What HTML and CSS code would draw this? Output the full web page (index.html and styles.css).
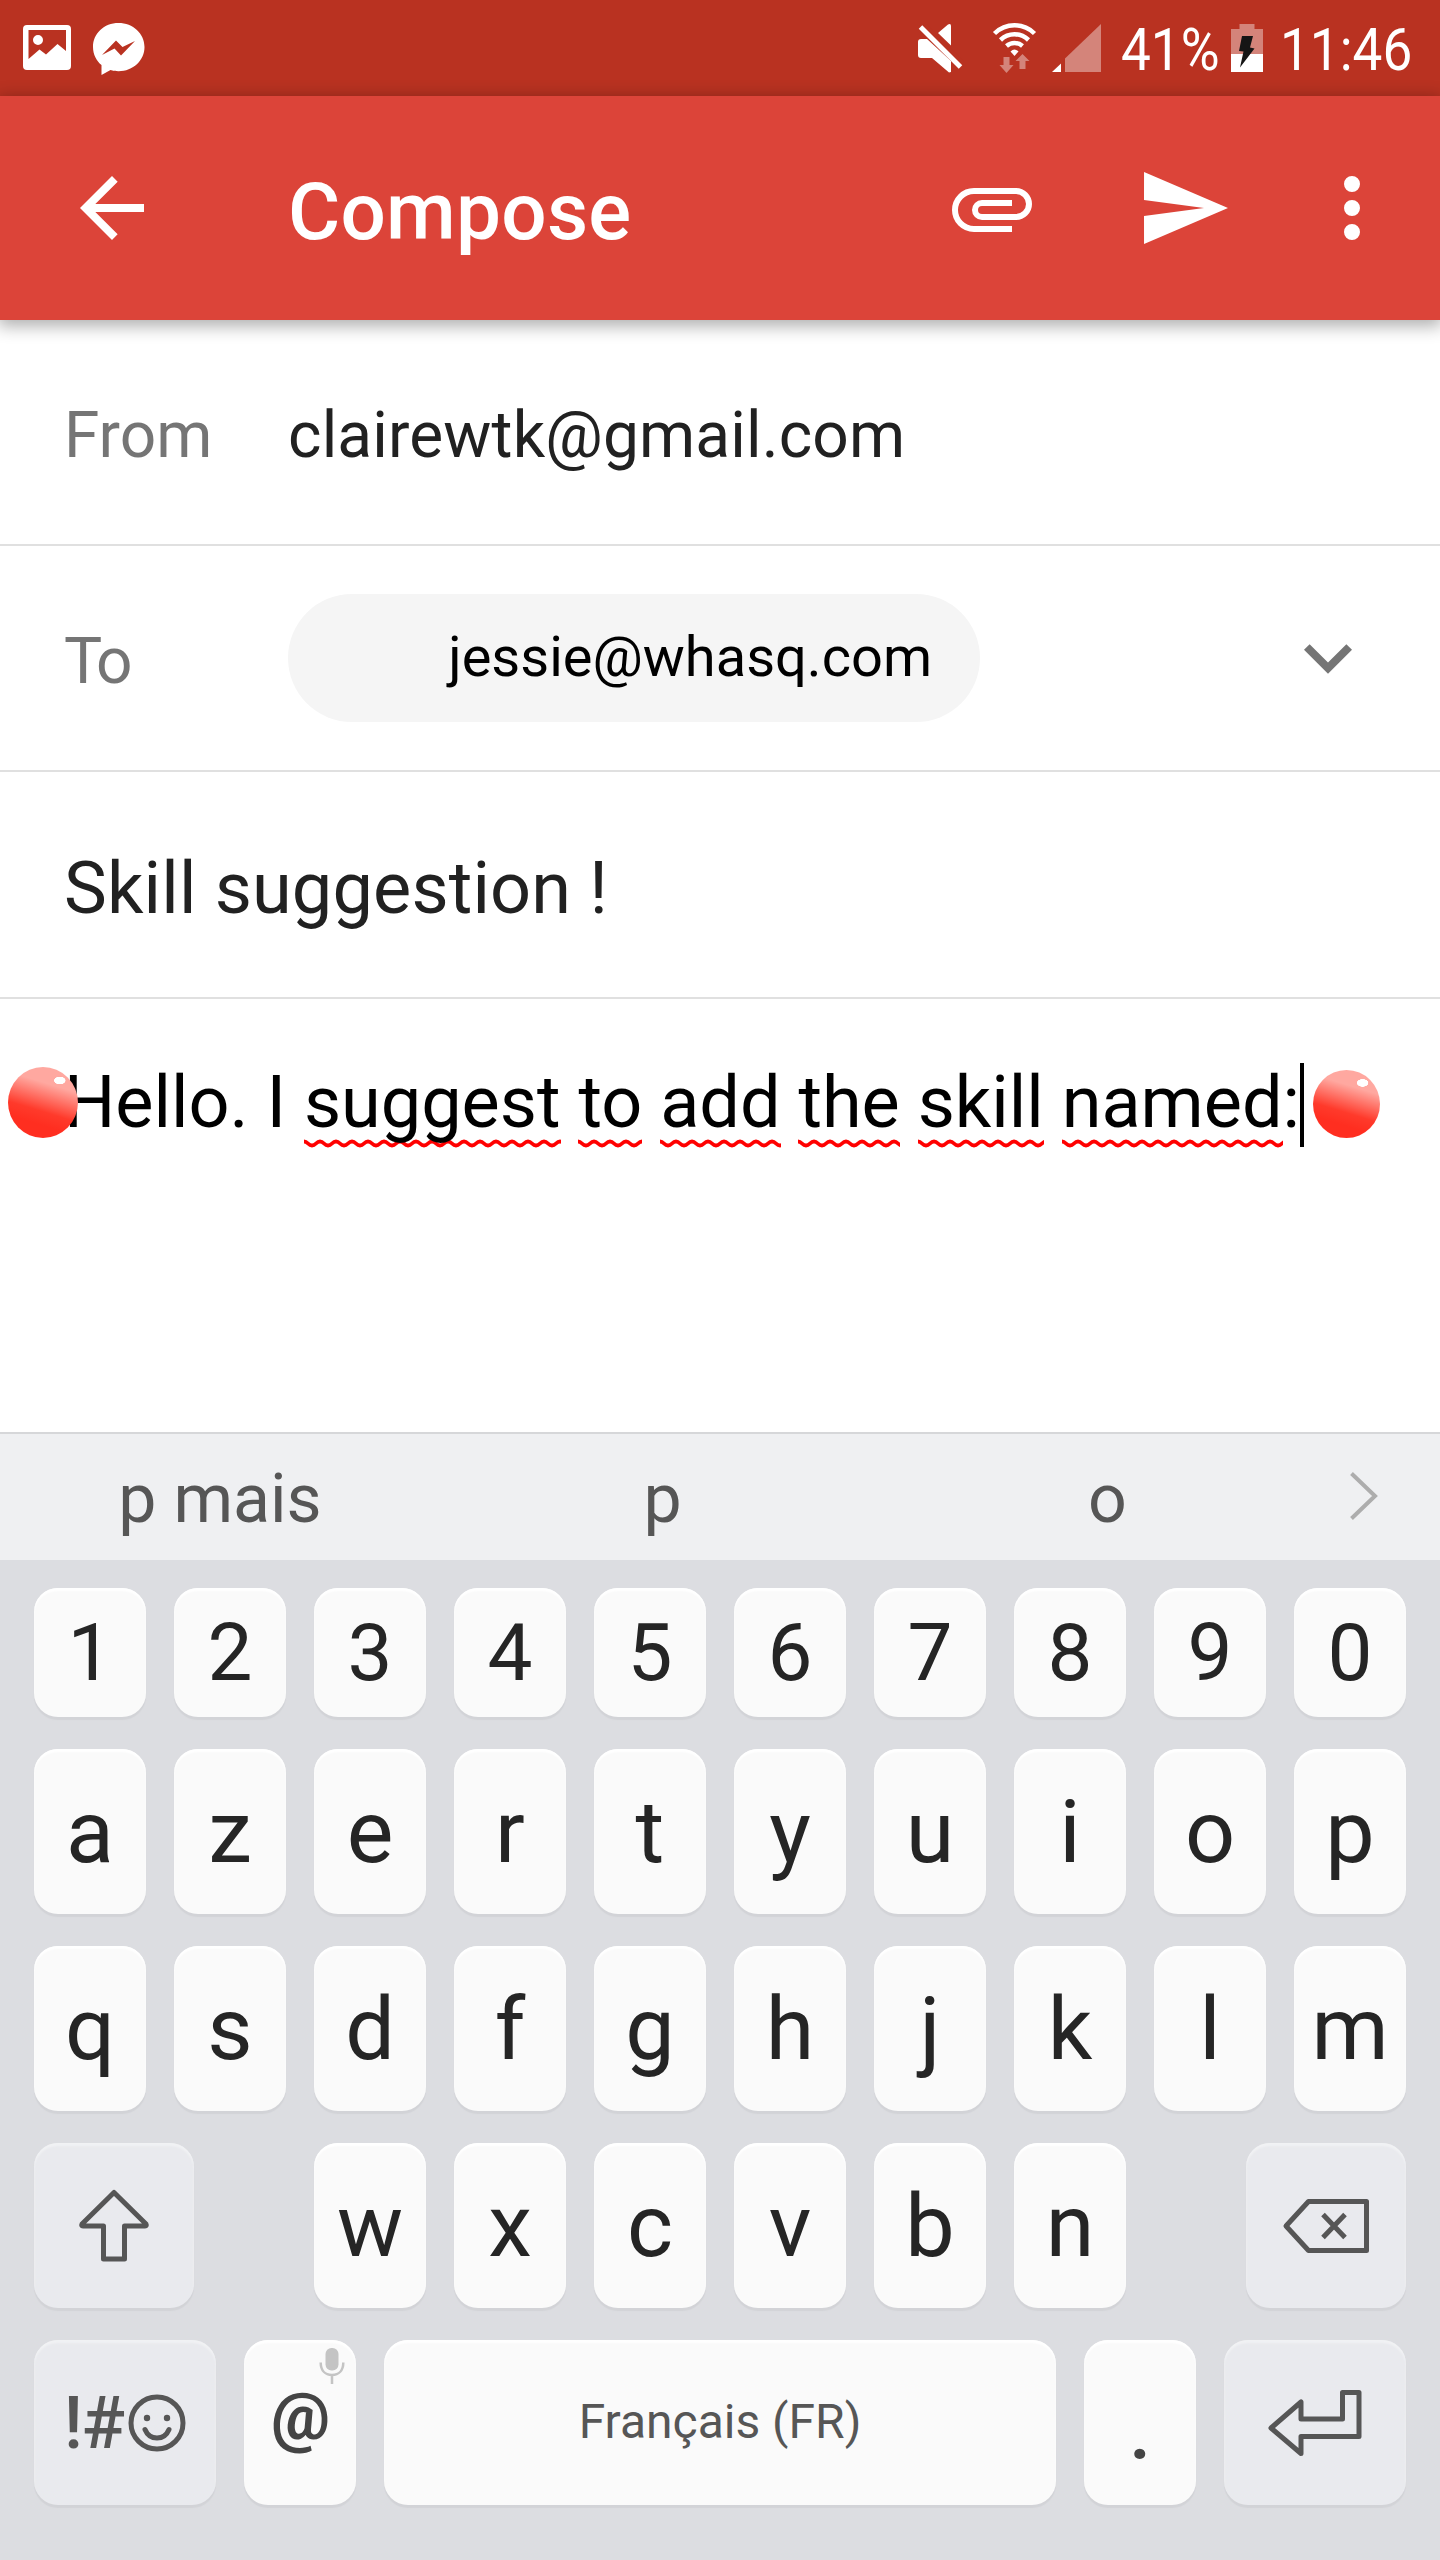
FILE: index.html
```html
<!DOCTYPE html>
<html lang="en">
<head>
<meta charset="utf-8">
<title>Compose</title>
<link rel="stylesheet" href="styles.css">
</head>
<body>
<div class="screen">
  <header class="status">
    <svg class="status-photo" viewBox="23 25 48 46" width="48" height="46"><path fill="#fff" fill-rule="evenodd" d="M27 25h40a4 4 0 0 1 4 4v37a4 4 0 0 1-4 4H27a4 4 0 0 1-4-4V29a4 4 0 0 1 4-4zM28.500 30v29l11-9.500 6.500 5 11.500-10.500 8.500 7V30zM38 35a5 5 0 1 1 0 10 5 5 0 0 1 0-10z"/></svg>
    <svg class="status-messenger" viewBox="93 23 52 53" width="52" height="53"><path fill="#fff" d="M118.500 23C104 23 93 33.500 93 47c0 7.500 3.500 14 8.500 18v10l9-5c2.500.800 5 1.200 8 1.200 14.500 0 26-10.700 26-24.200S133 23 118.500 23z"/><path fill="#b93221" d="M102 55l14-14.500 6.500 6.500 12.500-6-14 14.500-6.500-7z"/></svg>
    <span class="spacer"></span>
    <svg class="status-mute" viewBox="916 22 48 52" width="48" height="52"><path fill="#fff" d="M921 39h6l24 22v11l-2 .5L932 58h-11a3 3 0 0 1-3-3V42a3 3 0 0 1 3-3zM938 33l10-8.500q3-1.500 3 1.500v19.500z"/><path stroke="#b93221" stroke-width="4" d="M924 24l41 41"/><path stroke="#fff" stroke-width="5" d="M920.500 27l40 40"/></svg>
    <svg class="status-wifi" viewBox="992 22 46 52" width="46" height="52"><g fill="none" stroke="#fff" stroke-width="4.500"><path d="M994.500 33.500Q1003 25.300 1014.500 25.300T1034.500 33.500"/><path d="M1000.500 40Q1006.500 34.300 1014.500 34.300T1028.500 40"/><path d="M1006.500 46Q1010 43 1014.500 43T1022.500 46"/></g><path fill="#fff" d="M1010.500 51.500q4-4 8 0l-4 4.500z"/><g fill="#d4847a"><path d="M1003.500 57h6v8h4l-7 8-7-8h4zM1019.500 69h6v-8h4l-7-7-7 7h4z"/></g></svg>
    <svg class="status-signal" viewBox="1052 24 49 48" width="49" height="48"><path fill="#fff" d="M1052 72h9v-8.500z"/><path fill="#d4847a" d="M1065 72V58.500L1101 24v48z"/></svg>
    <span class="status-percent">41%</span>
    <svg class="status-battery" viewBox="1231 24 32 48" width="32" height="48"><path fill="#d4847a" d="M1239.500 24h15v5h8.500v25h-32V29h8.500z"/><path fill="#fff" d="M1231 54h32v18h-32z"/><path fill="#151515" d="M1242 36h11l-3 11.500 4.500 1-14.500 19 3.500-16-4.500-.5z"/></svg>
    <span class="status-clock">11:46</span>
  </header>

  <div class="appbar">
    <svg class="icon" viewBox="0 0 24 24"><path fill="#fff" d="M20 11H7.830l5.590-5.590L12 4l-8 8 8 8 1.410-1.410L7.830 13H20z"/></svg>
    <h1 class="title">Compose</h1>
    <svg class="icon icon-attach" viewBox="944 160 96 96"><path fill="none" stroke="#fff" stroke-width="6" d="M1012 229H974a19 19 0 0 1 0-38h42a13 13 0 0 1 0 26H982a7 7 0 0 1 0-14h30"/></svg>
    <svg class="icon" viewBox="0 0 24 24"><path fill="#fff" d="M2.010 21L23 12 2.010 3 2 10l15 2-15 2z"/></svg>
    <svg class="icon icon-more" viewBox="0 0 24 24"><path fill="#fff" d="M12 8a2 2 0 1 0 0-4 2 2 0 0 0 0 4zm0 2a2 2 0 1 0 0 4 2 2 0 0 0 0-4zm0 6a2 2 0 1 0 0 4 2 2 0 0 0 0-4z"/></svg>
  </div>

  <main class="form">
    <div class="row"><span class="label">From</span><span class="value">clairewtk@gmail.com</span></div>
    <div class="row"><span class="label label-to">To</span><span class="chip">jessie@whasq.com</span><span class="spacer"></span>
      <svg class="expand" viewBox="6 7.840 12 7.410"><path fill="#757575" d="M7.410 7.840L12 12.420l4.590-4.580L18 9.250l-6 6-6-6z"/></svg></div>
    <div class="row"><span class="subject">Skill suggestion !</span></div>
    <div class="message"><p class="text">Hello. I <span class="typo">suggest</span> <span class="typo">to</span> <span class="typo">add</span> <span class="typo">the</span> <span class="typo">skill</span> <span class="typo">named</span>:</p><span class="caret"></span>
      <span class="ball ball-start"></span><span class="ball ball-end"></span></div>
  </main>

  <div class="suggestions">
    <span class="word word-first">p mais</span><span class="word">p</span><span class="word">o</span>
    <svg class="next" viewBox="1350 1472 28 48" width="28" height="48"><path fill="none" stroke="#adadad" stroke-width="4" d="M1351.500 1473.500l23.500 22.500-23.500 22.500"/></svg>
  </div>

  <section class="keyboard">
    <div class="keys digits"><span class="key">1</span><span class="key">2</span><span class="key">3</span><span class="key">4</span><span class="key">5</span><span class="key">6</span><span class="key">7</span><span class="key">8</span><span class="key">9</span><span class="key">0</span></div>
    <div class="keys"><span class="key">a</span><span class="key">z</span><span class="key">e</span><span class="key">r</span><span class="key">t</span><span class="key">y</span><span class="key">u</span><span class="key">i</span><span class="key">o</span><span class="key">p</span></div>
    <div class="keys"><span class="key">q</span><span class="key">s</span><span class="key">d</span><span class="key">f</span><span class="key">g</span><span class="key">h</span><span class="key">j</span><span class="key">k</span><span class="key">l</span><span class="key">m</span></div>
    <div class="keys spread">
      <span class="key dim wide"><svg viewBox="76 2186 76 80" width="76" height="80"><path class="line" d="M114 2192.500L82 2224q-1 2 1 2h20.500v33h21v-33H145q2 0 1-2z"/></svg></span>
      <div class="keys"><span class="key">w</span><span class="key">x</span><span class="key">c</span><span class="key">v</span><span class="key">b</span><span class="key">n</span></div>
      <span class="key dim wide"><svg viewBox="1282 2197 88 58" width="88" height="58"><path class="line" d="M1286 2226l22.500-24.500h58v49h-58zM1323 2214.500l22 23M1345 2214.500l-22 23"/></svg></span>
    </div>
    <div class="keys">
      <span class="key dim symbols"><span class="symbols-text">!#</span><svg viewBox="128 2394 58 58" width="58" height="58"><circle class="line" cx="157" cy="2423" r="26"/><path class="line" stroke-linecap="round" d="M145 2429.500q3.500 8.500 12 8.500t12-8.500"/><circle fill="#565656" cx="147" cy="2418" r="3.200"/><circle fill="#565656" cx="167" cy="2418" r="3.200"/></svg></span>
      <span class="key at">@<svg class="mic" viewBox="319 2347 26 38" width="26" height="38"><rect fill="#c4c4c4" x="325.500" y="2348" width="13" height="22.500" rx="6"/><path fill="none" stroke="#c4c4c4" stroke-width="2.500" d="M320.700 2362.500c0 8 4.500 12.500 11.300 12.500s11.300-4.500 11.300-12.500M332 2375v9"/></svg></span>
      <span class="key space">Français (FR)</span>
      <span class="key dot">.</span>
      <span class="key dim enter"><svg viewBox="1267 2388 96 70" width="96" height="70"><path class="line" d="M1271 2428l30-26v17h41.500v-26.500H1359v44h-58v17z"/></svg></span>
    </div>
  </section>
</div>
</body>
</html>
```

FILE: styles.css
```css
* { box-sizing: border-box; }
body { margin: 0; font-family: Roboto, sans-serif; background: #fff; }
svg { display: block; flex: none; }
.screen { width: 1440px; height: 2560px; display: flex; flex-direction: column; overflow: hidden; background: #fff; }
.spacer { flex: 1; }

.status { height: 96px; background: #b93221; display: flex; align-items: flex-start; padding-left: 23px; color: #fff; font-size: 60px; line-height: 100px; }
.status-photo { margin-top: 25px; }
.status-messenger { margin: 23px 0 0 22px; }
.status-mute { margin: 22px 28px 0 0; }
.status-wifi { margin: 22px 14px 0 0; }
.status-signal { margin: 24px 20px 0 0; }
.status-percent { width: 110px; transform: scaleX(.885); transform-origin: left; white-space: nowrap; }
.status-battery { margin-top: 24px; }
.status-clock { width: 160px; margin-left: 17px; transform: scaleX(.885); transform-origin: left; white-space: nowrap; }

.appbar { position: relative; height: 224px; flex: none; background: #dc4439; display: flex; align-items: center; padding: 0 40px 0 64px; box-shadow: 0 4px 16px 2px rgba(0, 0, 0, .32); }
.icon { width: 96px; height: 96px; }
.icon-attach { margin-right: 96px; }
.icon-more { margin-left: 72px; }
.title { flex: 1; margin: 0; padding: 7px 0 0 128px; color: #fff; font-size: 80px; font-weight: 500; line-height: 94px; letter-spacing: .25px; }

.form { height: 1112px; flex: none; }
.row { height: 226px; display: flex; align-items: center; padding: 0 88px 0 64px; border-bottom: 2px solid #e0e0e0; }
.row:nth-child(3) { height: 227px; }
.label { width: 224px; padding-top: 6px; font-size: 64px; color: #757575; }
.label-to { letter-spacing: -3px; }
.value { padding-top: 6px; font-size: 64px; color: #212121; letter-spacing: .15px; }
.chip { width: 692px; height: 128px; border-radius: 64px; background: #f5f5f5; padding-right: 48px; text-align: right; font-size: 56px; line-height: 126px; color: #000; }
.expand { width: 48px; height: 30px; margin-top: 2px; }
.subject { padding-top: 8px; font-size: 72px; color: #212121; white-space: pre; letter-spacing: .17px; }
.message { position: relative; display: flex; padding: 64px 0 0 64px; }
.text { margin: 0; font-size: 72px; line-height: 79px; color: #000; white-space: nowrap; }
.typo { padding-bottom: 3px; background: url("data:image/svg+xml,%3Csvg xmlns='http://www.w3.org/2000/svg' width='16' height='9'%3E%3Cpath d='M-8 6.500C-4 6.500-4 2.500 0 2.500S4 6.500 8 6.500 12 2.500 16 2.500 20 6.500 24 6.500' fill='none' stroke='red' stroke-width='3.800'/%3E%3C/svg%3E") 0 100% repeat-x; }
.caret { width: 4px; height: 84px; background: #000; }
.ball { position: absolute; border-radius: 50%; background: radial-gradient(ellipse 6px 4px at 74% 19%, #fff 90%, transparent), linear-gradient(197deg, #ffa8a0 28%, #ff3a2b 60%, #ff2e20 75%); }
.ball-start { left: 8px; top: 68px; width: 70px; height: 71px; }
.ball-end { left: 1313px; top: 71px; width: 67px; height: 68px; }

.suggestions { height: 128px; flex: none; border-top: 2px solid #d6d7d9; background: #eff0f2; display: flex; align-items: center; color: #565656; font-size: 68px; }
.word { width: 445px; padding-top: 4px; text-align: center; }
.word-first { width: 440px; }
.next { margin-left: 20px; margin-top: -2px; }

.keyboard { flex: 1; background: #dcdde1; padding: 28px 34px 0; display: flex; flex-direction: column; gap: 32px; }
.keys { display: flex; gap: 28px; }
.spread { justify-content: space-between; }
.key { width: 112px; height: 165px; flex: none; display: flex; align-items: center; justify-content: center; border-radius: 24px; background: #fafafa; box-shadow: 0 3px 1px #d2d3d7, inset 0 3px 2px #fff; color: #252525; font-size: 88px; line-height: 1; }
.digits .key { height: 129px; font-size: 80px; }
.key.dim { background: #e9eaee; box-shadow: 0 3px 1px #d2d3d7, inset 0 3px 2px #f1f2f4; }
.key.wide { width: 160px; }
.key.symbols { width: 182px; font-size: 72px; font-weight: 500; color: #565656; padding-left: 0; }
.symbols-text { padding-top: 2px; margin-right: 4px; letter-spacing: -1px; }
.key.at { position: relative; font-size: 66px; font-weight: 700; color: #444; padding-bottom: 12px; padding-left: 1px; }
.mic { position: absolute; right: 11px; top: 7px; }
.key.space { width: 672px; font-size: 48px; color: #565656; padding-bottom: 1px; }
.key.dot { font-weight: 500; font-size: 80px; color: #444; padding-top: 18px; }
.key.enter { width: 182px; }
.line { fill: none; stroke: #565656; stroke-width: 5; stroke-linejoin: round; }
```
